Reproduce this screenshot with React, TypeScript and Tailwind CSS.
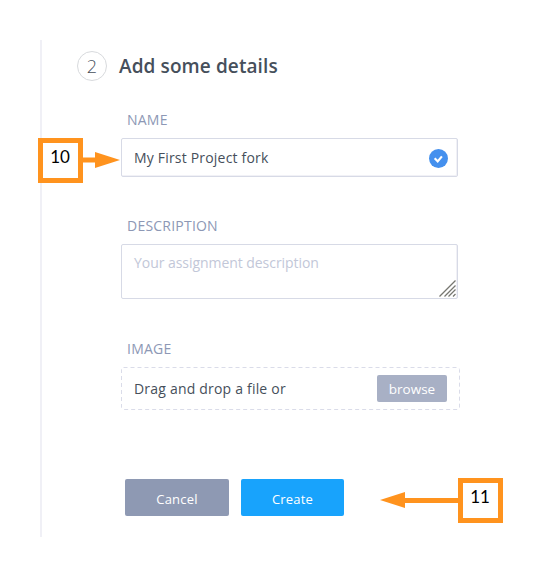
import React from "react";

function Label({ children }: { children: React.ReactNode }) {
  return <div className="ml-[6px] h-[18px] text-[14px] leading-[18px] font-medium tracking-[0.22px] text-[#8d98b5]">{children}</div>;
}

function Callout({ value }: { value: string }) {
  return (
    <div className="h-[45px] w-[45px] border-[5px] border-[#ff931e] bg-white pt-[4px] pr-px text-center font-['Lato',sans-serif] text-[17px] leading-[20px] text-black">
      {value}
    </div>
  );
}

export default function App() {
  return (
    <div className="relative h-[577px] w-[560px] overflow-hidden bg-white pt-[40px] pl-[40px] font-['Open_Sans',sans-serif] text-[#464f5b]">
      <main className="h-[497px] w-[480px] border-l-2 border-[#f0f0f6] pt-[11px] pl-[35px]">
        <header className="flex h-[30px] items-center gap-[12px]">
          <div className="flex h-[30px] w-[30px] items-center justify-center rounded-full border border-[#d8dadd] text-[18px] font-light text-[#464f5b]">2</div>
          <h1 className="text-[19px] leading-[28px] font-semibold tracking-[0.1px] whitespace-nowrap text-[#464f5b]">Add some details</h1>
        </header>
        <form className="mt-[30px] ml-[44px] w-[339px]">
          <Label>NAME</Label>
          <div className="mt-[9px] flex h-[39px] w-[337px] items-center justify-between rounded-[2px] border border-[#d7dae6] pr-[9px] pl-[12px] text-[14px] shadow-[inset_-1px_-1px_0_#f1f1f6]">
            <span className="pb-px font-medium tracking-[0.19px]">My First Project fork</span>
            <svg className="mt-[2px] h-[19px] w-[19px]" viewBox="0 0 19 19" fill="none">
              <circle cx="9.5" cy="9.5" r="9.5" fill="#4490ee" />
              <path d="m5.7 9.2 3 3.2 4.2-5" stroke="white" strokeWidth="2.2" />
            </svg>
          </div>
          <div className="mt-[40px]">
            <Label>DESCRIPTION</Label>
          </div>
          <div className="mt-[9px] flex h-[55px] w-[337px] justify-between rounded-[2px] border border-[#d7dae6] pl-[12px] shadow-[inset_-1px_0_0_#f1f1f6]">
            <span className="pt-[8px] text-[14px] leading-[20px] tracking-[-0.05px] text-[#c2c7d8]">Your assignment description</span>
            <svg className="mr-px mb-px h-[17px] w-[17px] self-end" viewBox="0 0 17 17" fill="none" stroke="#777771" strokeWidth="1.3">
              <path d="M.5 16.5 16.5.5M5.5 16.5l11-11M9.5 16.5l7-7M14 16.5l2.5-2.5" />
            </svg>
          </div>
          <div className="mt-[41px]">
            <Label>IMAGE</Label>
          </div>
          <div className="relative mt-[9px] flex h-[43px] items-center justify-between pr-[13px] pl-[13px]">
            <svg className="absolute inset-0 h-[43px] w-[339px]" fill="none" stroke="#dadce9" strokeDasharray="4 3">
              <rect x=".5" y=".5" width="338" height="42" rx="2" />
            </svg>
            <span className="text-[14px] font-medium tracking-[0.2px]">Drag and drop a file or</span>
            <button type="button" className="h-[27px] w-[70px] rounded-[2px] bg-[#a8b0c5] pt-[2px] text-[13.5px] font-medium text-white">browse</button>
          </div>
          <div className="mt-[69px] ml-[4px] flex gap-[12px] text-[13px] font-medium tracking-[0.2px] text-white">
            <button type="button" className="h-[37px] w-[104px] rounded-[2px] bg-[#8e99b3] pt-[4px]">Cancel</button>
            <button type="button" className="h-[37px] w-[103px] rounded-[2px] bg-[#18a3fc] pt-[4px]">Create</button>
          </div>
        </form>
      </main>
      <div className="absolute top-[138px] left-[38px] flex">
        <Callout value="10" />
        <svg className="h-[45px] w-[38px]" viewBox="0 0 38 45" fill="#ff931e">
          <path d="M0 19.5h12V14l25 8-25 8v-5.5H0z" />
        </svg>
      </div>
      <div className="absolute top-[478px] left-[380px] flex">
        <svg className="h-[45px] w-[78px]" viewBox="0 0 78 45" fill="#ff931e">
          <path d="M78 20H25v-6L0 22l25 8v-5h53z" />
        </svg>
        <Callout value="11" />
      </div>
    </div>
  );
}
